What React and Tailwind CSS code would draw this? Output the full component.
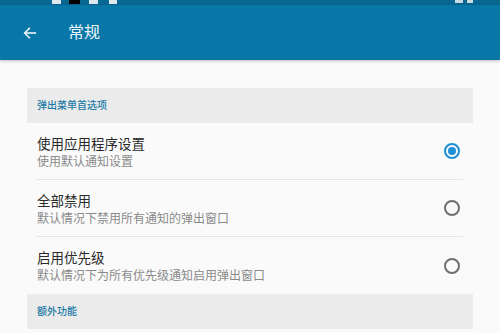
import React, { useState } from 'react';

const options = [
  { id: 'app', title: '使用应用程序设置', subtitle: '使用默认通知设置' },
  { id: 'off', title: '全部禁用', subtitle: '默认情况下禁用所有通知的弹出窗口' },
  { id: 'prio', title: '启用优先级', subtitle: '默认情况下为所有优先级通知启用弹出窗口' },
];

function Radio({ checked }) {
  return (
    <div
      className={
        'w-4 h-4 rounded-full border-2 flex items-center justify-center ' +
        (checked ? 'border-[#1e90d6]' : 'border-[#6f6f6f]')
      }
    >
      {checked && <div className="w-2 h-2 rounded-full bg-[#1e90d6]" />}
    </div>
  );
}

function SectionHeader({ children }) {
  return (
    <div className="h-[35px] bg-[#ebebeb] flex items-center px-[10px] text-[10px] text-[#1b7aa6] font-medium">
      {children}
    </div>
  );
}

export default function App() {
  const [selected, setSelected] = useState('app');

  return (
    <div
      className="w-[500px] h-[333px] overflow-hidden bg-[#fafafa] flex flex-col"
      style={{ fontFamily: 'Roboto, "Noto Sans CJK SC", sans-serif' }}
    >
      {/* barre d'état coupée */}
      <div className="h-[5px] bg-[#076892] relative">
        <div className="absolute left-[52px] top-0 w-[9px] h-[4px] bg-[#dfe8ee]" />
        <div className="absolute left-[69px] top-0 w-[11px] h-[4px] bg-black" />
        <div className="absolute left-[89px] top-0 w-[9px] h-[4px] bg-[#dfe8ee]" />
        <div className="absolute left-[109px] top-0 w-[8px] h-[4px] bg-[#dfe8ee]" />
        <div className="absolute left-[455px] top-0 w-[8px] h-[3px] bg-[#c9d9e2]" />
        <div className="absolute left-[467px] top-0 w-[6px] h-[3px] bg-[#c9d9e2]" />
      </div>

      {/* toolbar */}
      <div className="h-[55px] bg-[#0877a8] flex items-center shadow-[0_1px_3px_rgba(0,0,0,0.25)] z-10">
        <div className="w-[68px] pl-[22px] flex items-center">
          <svg width="16" height="16" viewBox="0 0 24 24" fill="none" stroke="#eaf3f8" strokeWidth="2.4" strokeLinecap="square">
            <path d="M20 12H5" />
            <path d="M11 5l-7 7 7 7" />
          </svg>
        </div>
        <span className="text-[16px] text-[#eef5f9]">常规</span>
      </div>

      {/* contenu */}
      <div className="px-[27px] pt-[28px]">
        <SectionHeader>弹出菜单首选项</SectionHeader>
        {options.map((opt, i) => (
          <div key={opt.id} className="px-[10px]">
            <div
              onClick={() => setSelected(opt.id)}
              className={
                'h-[57px] flex items-center justify-between ' +
                (i < options.length - 1 ? 'border-b border-[#e4e4e4]' : '')
              }
            >
              <div className="flex flex-col pt-[3px] whitespace-nowrap">
                <span className="text-[13.5px] leading-[17px] text-[#2a2a2a]">{opt.title}</span>
                <span className="text-[12px] leading-[15px] mt-[2px] text-[#8a8a8a]">{opt.subtitle}</span>
              </div>
              <div className="w-6 flex justify-center mr-[-1px]">
                <Radio checked={selected === opt.id} />
              </div>
            </div>
          </div>
        ))}
        <SectionHeader>额外功能</SectionHeader>
      </div>
    </div>
  );
}
